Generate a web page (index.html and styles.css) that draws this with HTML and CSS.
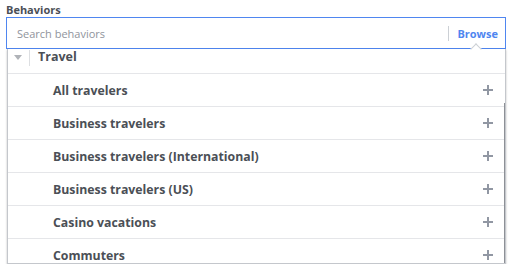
FILE: index.html
```html
<!DOCTYPE html>
<html lang="en">
<head>
    <meta charset="UTF-8">
    <title>Behaviors</title>
    <link rel="stylesheet" href="styles.css">
</head>
<body>
    <div class="field">
        <div class="field-label">Behaviors</div>
        <div class="search">
            <span class="search-text">Search behaviors</span>
            <span class="browse">Browse</span>
        </div>
        <div class="dropdown">
            <div class="group">
                <span class="caret"></span>
                <span class="group-name">Travel</span>
            </div>
            <div class="item"><span>All travelers</span><span class="plus"></span></div>
            <div class="item"><span>Business travelers</span><span class="plus"></span></div>
            <div class="item"><span>Business travelers (International)</span><span class="plus"></span></div>
            <div class="item"><span>Business travelers (US)</span><span class="plus"></span></div>
            <div class="item"><span>Casino vacations</span><span class="plus"></span></div>
            <div class="item"><span>Commuters</span><span class="plus"></span></div>
            <span class="thumb"></span>
        </div>
    </div>
</body>
</html>
```

FILE: styles.css
```css
body { margin: 0; background: #fff; font-family: "Open Sans", "Liberation Sans", sans-serif; }
.field { padding: 3px 7px 0 6px; width: 500px; }
.field-label { font-size: 11px; font-weight: bold; color: #4b4f56; line-height: 14px; }
.search {
    position: relative; height: 30px; border: 1px solid #4f86f0; display: flex; align-items: center;
    justify-content: space-between; padding: 0 7px 0 10px; font-size: 11px;
}
.search-text { color: #90949c; }
.browse {
    color: #4f86f0; font-weight: bold; border-left: 1px solid #ccd0d5; padding-left: 8px;
    line-height: 15px;
}
.search::after {
    content: ""; position: absolute; right: 25px; bottom: -1px; width: 7px; height: 7px;
    background: #fff; border-left: 1px solid #ccd0d5; border-top: 1px solid #ccd0d5;
    transform: translateY(50%) rotate(45deg); z-index: 2;
}
.dropdown {
    position: relative; margin-left: 1px; height: 214px; overflow: hidden;
    border: 1px solid #c4c7cc; border-top: none; box-shadow: 0 1px 2px rgba(0, 0, 0, 0.25); background: #fff;
}
.group { height: 23px; display: flex; align-items: flex-start; border-bottom: 1px solid #e5e6e9; padding-top: 1px; }
.caret {
    width: 0; height: 0; margin: 5px 0 0 6px; border-left: 4px solid transparent;
    border-right: 4px solid transparent; border-top: 5px solid #b0b3b8;
}
.group-name {
    margin-left: 7px; padding-left: 8px; border-left: 1px solid #dddfe2; height: 16px; line-height: 14px;
    font-size: 12.5px; font-weight: bold; color: #4b4f56;
}
.item {
    height: 32px; display: flex; align-items: center; justify-content: space-between;
    border-bottom: 1px solid #e5e6e9; padding: 0 12px 0 45px;
    font-size: 12.3px; font-weight: bold; color: #4b4f56;
}
.plus { position: relative; width: 10px; height: 10px; }
.plus::before, .plus::after { content: ""; position: absolute; background: #9197a3; }
.plus::before { left: 0; top: 4px; width: 10px; height: 2px; }
.plus::after { left: 4px; top: 0; width: 2px; height: 10px; }
.thumb { position: absolute; right: 0; top: 54px; bottom: 0; width: 1px; background: #8d9096; }
```
